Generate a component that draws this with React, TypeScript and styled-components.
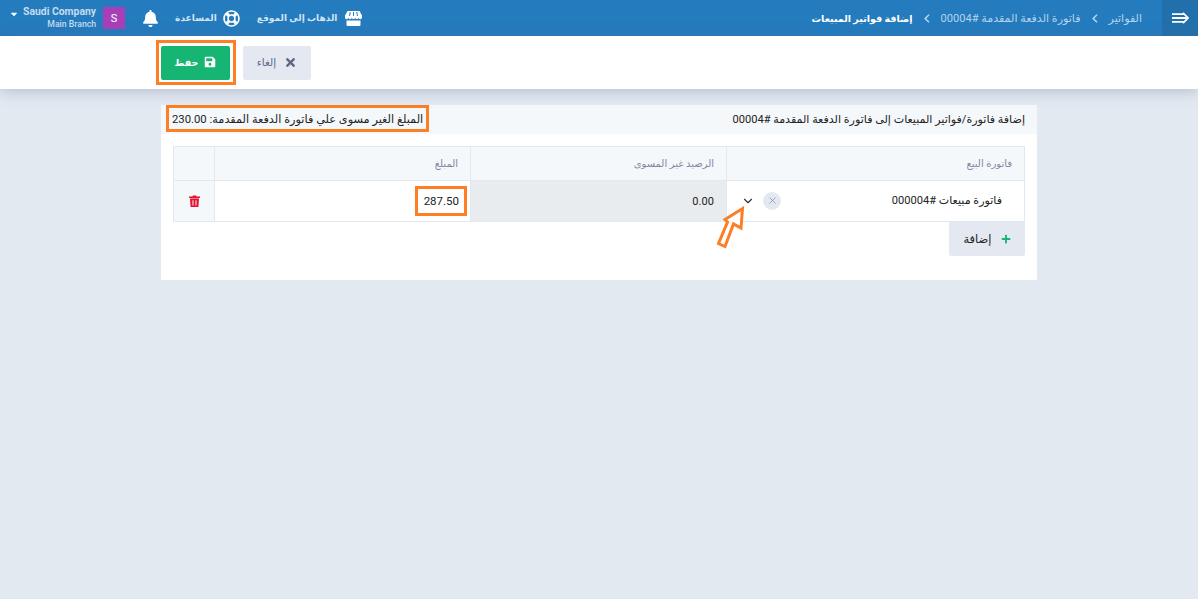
import { ChevronDown, X } from 'lucide-react'
import { FaBell, FaCaretDown, FaPlus, FaRegLifeRing, FaSave, FaTimes } from 'react-icons/fa'
import styled, { createGlobalStyle } from 'styled-components'

const ORANGE = '#fd7e23'

const GlobalStyle = createGlobalStyle`
  html, body {
    margin: 0;
    height: 100%;
    background: #e3e9f1;
  }
  body {
    font-family: Roboto, "DejaVu Sans", sans-serif;
    font-size: 11px;
    color: #222;
  }
`

const Page = styled.div`
  direction: rtl;
  min-height: 599px;
  position: relative;
  overflow: hidden;
`

const TopBar = styled.header`
  height: 36px;
  background: #247bbd;
  display: flex;
  align-items: center;
  color: #fff;
`

const MenuToggle = styled.div`
  width: 36px;
  height: 36px;
  background: #2270ab;
  display: flex;
  align-items: center;
  justify-content: center;
`

const Breadcrumb = styled.nav`
  display: flex;
  align-items: center;
  margin-right: 20px;
  gap: 11px;
`

const Crumb = styled.span<{ $current?: boolean }>`
  font-size: ${(p) => (p.$current ? 9.5 : 11.1)}px;
  font-weight: ${(p) => (p.$current ? 700 : 400)};
  color: ${(p) => (p.$current ? '#fff' : '#b4d3ec')};
`

const CrumbArrow = styled.svg`
  width: 6px;
  height: 9px;
  fill: none;
  stroke: #b4d3ec;
  stroke-width: 1.6;
`

const TopTools = styled.div`
  margin-right: auto;
  display: flex;
  align-items: center;
  padding-left: 9px;
`

const ToolLink = styled.div<{ $gap: number; $space: number }>`
  display: flex;
  align-items: center;
  gap: ${(p) => p.$gap}px;
  margin-left: ${(p) => p.$space}px;
  font-size: 9px;
  font-weight: 700;
  color: #d3e4f3;
`

const Avatar = styled.div`
  width: 22px;
  height: 22px;
  background: #a83fb8;
  color: #fff;
  font-size: 11px;
  display: flex;
  align-items: center;
  justify-content: center;
  margin-left: 7px;
`

const Account = styled.div`
  direction: ltr;
  text-align: right;
  font-size: 10.4px;
  line-height: 12px;
  font-weight: 700;
  color: #c6dcef;
`

const Branch = styled.div`
  font-weight: 500;
  font-size: 8.7px;
`

const ActionBar = styled.div`
  height: 53px;
  background: #fff;
  box-shadow: 0 2px 14px rgba(90, 105, 140, 0.35);
  position: relative;
`

const ActionInner = styled.div`
  width: 876px;
  margin: 0 auto;
  padding-top: 10px;
  display: flex;
  justify-content: flex-end;
  gap: 13px;
`

const SaveFrame = styled.span`
  display: flex;
  border: 3px solid ${ORANGE};
  padding: 3px 3px 2px 2px;
  margin: -6px -6px -5px -5px;
`

const Button = styled.button<{ $primary?: boolean }>`
  height: 34px;
  width: ${(p) => (p.$primary ? 69 : 68)}px;
  padding: 0 0 2px;
  border: 0;
  border-radius: 2px;
  font: inherit;
  font-size: ${(p) => (p.$primary ? 9.5 : 10.5)}px;
  font-weight: ${(p) => (p.$primary ? 700 : 400)};
  display: flex;
  align-items: center;
  justify-content: center;
  gap: ${(p) => (p.$primary ? 6 : 8)}px;
  background: ${(p) => (p.$primary ? '#17b573' : '#e4e9f1')};
  color: ${(p) => (p.$primary ? '#fff' : '#5f6787')};
`

const Card = styled.section`
  width: 876px;
  height: 175px;
  margin: 16px auto 0;
  background: #fff;
`

const CardHead = styled.div`
  height: 29px;
  background: #f5f8fb;
  display: flex;
  align-items: flex-start;
  justify-content: space-between;
  padding: 0 12px 0 5px;
  font-size: 11.1px;
`

const CardTitle = styled.span`
  line-height: 29px;
`

const Unsettled = styled.span`
  height: 27px;
  line-height: 23px;
  box-sizing: border-box;
  border: 3px solid ${ORANGE};
  padding: 0 3px;
  font-size: 11.3px;
  white-space: nowrap;
`

const Table = styled.div`
  margin: 12px 12px 0;
  display: grid;
  grid-template-columns: 298px 256px 256px 41px;
  grid-template-rows: 34px 41px;
  border-top: 1px solid #e2e8f0;
  border-right: 1px solid #e2e8f0;
  box-sizing: border-box;
  width: 852px;
  height: 76px;
`

const HeadCell = styled.div`
  background: #f5f8fb;
  border-left: 1px solid #e2e8f0;
  border-bottom: 1px solid #e2e8f0;
  color: #8088a4;
  font-size: 10px;
  line-height: 33px;
  padding: 0 12px;
`

const Cell = styled.div<{ $tone?: string }>`
  background: ${(p) => p.$tone || '#fff'};
  border-left: 1px solid #e2e8f0;
  border-bottom: 1px solid #e2e8f0;
  display: flex;
  align-items: center;
  padding: 0 12px;
  font-size: 11px;
  min-width: 0;
`

const InvoiceName = styled.span`
  margin: 0 10px 2px 0;
  font-size: 11.1px;
`

const SelectControls = styled.div`
  margin-right: auto;
  display: flex;
  align-items: center;
  gap: 8px;
  padding: 0 0 1px 2px;
`

const ClearDot = styled.span`
  width: 18px;
  height: 18px;
  border-radius: 50%;
  background: #e4e9f1;
  color: #7c87a8;
  display: flex;
  align-items: center;
  justify-content: center;
`

const Amount = styled.span`
  direction: ltr;
  letter-spacing: 0.1px;
`

const AmountBox = styled.span`
  box-sizing: border-box;
  height: 30px;
  width: 52px;
  border: 3px solid ${ORANGE};
  display: flex;
  align-items: center;
  justify-content: flex-end;
  padding-right: 5px;
  direction: ltr;
  margin: 0 -9px 1px 0;
  font-size: 11.5px;
`

const DeleteCell = styled(Cell)`
  justify-content: center;
  padding: 0 0 0 1px;
  background: #f5f8fb;
`

const AddRow = styled.div`
  margin: 0 12px;
  display: flex;
`

const AddButton = styled.button`
  width: 76px;
  height: 34px;
  border: 0;
  border-radius: 0 0 2px 2px;
  background: #e4e9f1;
  font: inherit;
  font-size: 11.5px;
  color: #222;
  display: flex;
  align-items: center;
  justify-content: center;
  gap: 9px;
`

const ArrowMark = styled.svg`
  position: absolute;
  left: 714px;
  top: 204px;
  width: 34px;
  height: 48px;
`

const App = () => {
  return (
    <Page>
      <GlobalStyle />
      <TopBar>
        <MenuToggle>
          <svg width="17" height="12" viewBox="0 0 17 12" fill="none" stroke="#fff" strokeWidth="1.8">
            <path d="M0 2.2h12M0 6h15.5M0 9.8h12M11 .8 16 6l-5 5.2" />
          </svg>
        </MenuToggle>
        <Breadcrumb>
          <Crumb>الفواتير</Crumb>
          <CrumbArrow viewBox="0 0 6 9"><path d="M5 .8 1.2 4.5 5 8.2" /></CrumbArrow>
          <Crumb>فاتورة الدفعة المقدمة #00004</Crumb>
          <CrumbArrow viewBox="0 0 6 9"><path d="M5 .8 1.2 4.5 5 8.2" /></CrumbArrow>
          <Crumb $current>إضافة فواتير المبيعات</Crumb>
        </Breadcrumb>
        <TopTools>
          <ToolLink $gap={8} $space={17}>
            <svg width="17" height="15" viewBox="0 0 17 15" fill="#fff">
              <path d="M2.5 0h12L17 4.5v2a1.7 1.7 0 0 1-3.4 0 1.7 1.7 0 0 1-3.4 0 1.7 1.7 0 0 1-3.4 0 1.7 1.7 0 0 1-3.4 0 1.7 1.7 0 0 1-3.4 0v-2z" />
              <path d="M5.2 1 4.6 5M8.5 1v4M11.8 1l.6 4" stroke="#247bbd" strokeWidth="1" />
              <path d="M1.5 9.4h14V14a1 1 0 0 1-1 1h-12a1 1 0 0 1-1-1z" />
            </svg>
            <span>الذهاب إلى الموقع</span>
          </ToolLink>
          <ToolLink $gap={6} $space={16}>
            <FaRegLifeRing size={17} color="#fff" />
            <span>المساعدة</span>
          </ToolLink>
          <ToolLink $gap={0} $space={17}>
            <FaBell size={17} color="#fff" />
          </ToolLink>
          <Avatar>S</Avatar>
          <Account>
            Saudi Company
            <Branch>Main Branch</Branch>
          </Account>
          <FaCaretDown size={10} color="#fff" style={{ marginRight: 4, marginTop: -9 }} />
        </TopTools>
      </TopBar>

      <ActionBar>
        <ActionInner>
          <Button>
            <FaTimes size={13} color="#5f6787" />
            إلغاء
          </Button>
          <SaveFrame>
            <Button $primary>
              <FaSave size={12} color="#fff" />
              حفظ
            </Button>
          </SaveFrame>
        </ActionInner>
      </ActionBar>

      <Card>
        <CardHead>
          <CardTitle>إضافة فاتورة/فواتير المبيعات إلى فاتورة الدفعة المقدمة #00004</CardTitle>
          <Unsettled>المبلغ الغير مسوى علي فاتورة الدفعة المقدمة: 230.00</Unsettled>
        </CardHead>
        <Table>
          <HeadCell>فاتورة البيع</HeadCell>
          <HeadCell>الرصيد غير المسوى</HeadCell>
          <HeadCell>المبلغ</HeadCell>
          <HeadCell />
          <Cell>
            <InvoiceName>فاتورة مبيعات #000004</InvoiceName>
            <SelectControls>
              <ClearDot><X size={11} strokeWidth={1.5} /></ClearDot>
              <ChevronDown size={14} strokeWidth={2} color="#333" />
            </SelectControls>
          </Cell>
          <Cell $tone="#e9ecef">
            <Amount>0.00</Amount>
          </Cell>
          <Cell>
            <AmountBox>287.50</AmountBox>
          </Cell>
          <DeleteCell>
            <svg width="11" height="12" viewBox="0 0 11 12" fill="#e8112d">
              <path d="M0 1.5h3.4L4 .4h3l.6 1.1H11v1.6H0zM1 3.6h9l-.6 8.4H1.6zM3.5 5.2v5.2h1V5.2zm3 0v5.2h1V5.2z" fillRule="evenodd" />
            </svg>
          </DeleteCell>
        </Table>
        <AddRow>
          <AddButton>
            <FaPlus size={10} color="#17b573" />
            إضافة
          </AddButton>
        </AddRow>
      </Card>

      <ArrowMark viewBox="714 204 34 48">
        <path
          d="M742.5 208.5 741 228 733.5 224 725 246.5 718.5 243.5 727.5 222 725 219.5Z"
          fill="#fff"
          stroke={ORANGE}
          strokeWidth="3"
        />
      </ArrowMark>
    </Page>
  )
}

export default App
